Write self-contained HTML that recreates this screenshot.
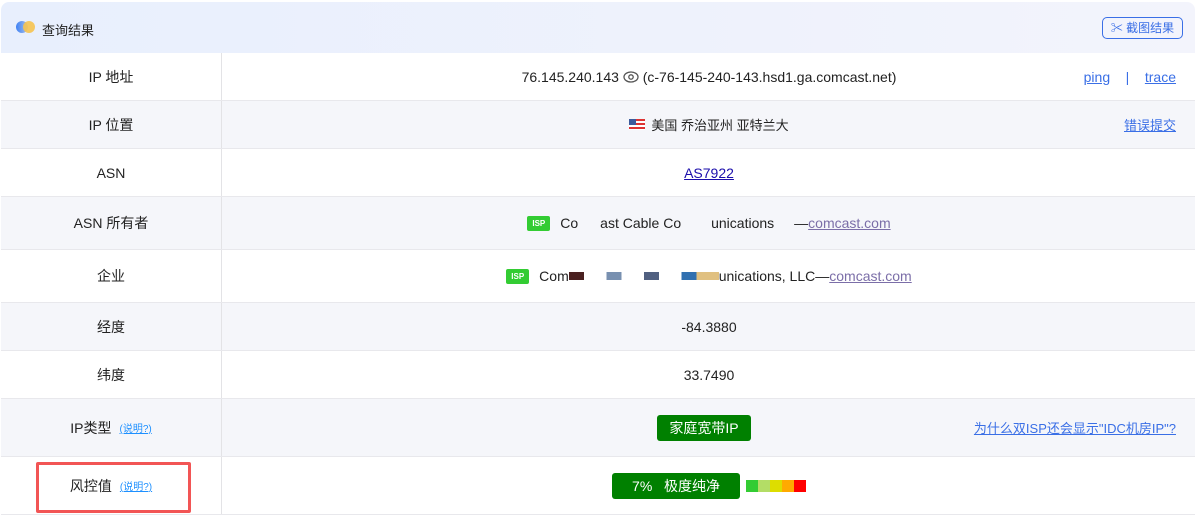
<!DOCTYPE html>
<html><head><meta charset="utf-8"><style>
*{margin:0;padding:0;box-sizing:border-box}
body{width:1195px;height:517px;background:#fff;font-family:"Liberation Sans","Noto Sans CJK SC",sans-serif;font-size:14px;color:#222;position:relative;overflow:hidden}
.hd{position:absolute;left:1px;top:2px;width:1194px;height:51px;background:linear-gradient(90deg,#e8effd,#f3f4fc);border-radius:8px 8px 0 0}
.row{position:absolute;left:1px;width:1194px;border-bottom:1px solid #e8e8ec}
.g{background:#f5f6fa}
.lab{position:absolute;left:0;top:0;width:221px;height:100%;border-right:1px solid #e3e3e6;display:flex;align-items:center;justify-content:center}
.val{position:absolute;left:222px;right:0;top:0;height:100%;display:flex;align-items:center;justify-content:center}
a{color:#3a6fe6;text-decoration:underline}
.sm{font-size:10px;color:#1e90ff;margin-left:8px}
.isp{display:inline-block;background:#33cc33;color:#fff;font-size:8px;font-weight:bold;padding:3px 5px;border-radius:2px;margin-right:10px}
.btn{background:#008000;color:#fff;border-radius:3px;padding:0 12px;height:26px;line-height:26px;font-size:14px}
.r{position:absolute;right:19px;top:0;height:100%;display:flex;align-items:center}
</style></head><body>
<div class="hd">
<div style="position:absolute;left:15px;top:19px;width:12px;height:12px;border-radius:6px;background:linear-gradient(90deg,#3f82f5,#a8c0ea)"></div>
<div style="position:absolute;left:22px;top:19px;width:12px;height:12px;border-radius:6px;background:#f6c350;opacity:.9"></div>
<div style="position:absolute;left:41px;top:18px;font-size:13px">查询结果</div>
<div style="position:absolute;right:12px;top:15px;width:81px;height:22px;border:1px solid #3a6fe6;border-radius:5px;color:#3a6fe6;font-size:12px;line-height:20px;text-align:center">✂ 截图结果</div>
</div>
<div class="row" style="top:53px;height:48px"><div class="lab">IP 地址</div><div class="val">76.145.240.143&nbsp;<svg width="16" height="12" viewBox="0 0 16 12"><ellipse cx="8" cy="6" rx="7" ry="5" fill="none" stroke="#555" stroke-width="1.3"/><circle cx="8" cy="6" r="2.2" fill="none" stroke="#555" stroke-width="1.3"/></svg>&nbsp;(c-76-145-240-143.hsd1.ga.comcast.net)</div><div class="r"><a>ping</a>&nbsp;&nbsp;&nbsp;&nbsp;<span style="color:#3a6fe6">|</span>&nbsp;&nbsp;&nbsp;&nbsp;<a>trace</a></div></div>
<div class="row g" style="top:101px;height:48px"><div class="lab">IP 位置</div><div class="val" style="font-size:13px"><span style="display:inline-block;width:16px;height:11px;background:repeating-linear-gradient(#d33 0 2px,#fff 2px 4px);position:relative;margin-right:6px"><span style="position:absolute;left:0;top:0;width:7px;height:6px;background:#3b5b9c"></span></span>美国 乔治亚州 亚特兰大</div><div class="r" style="font-size:13px"><a>错误提交</a></div></div>
<div class="row" style="top:149px;height:48px"><div class="lab">ASN</div><div class="val"><a style="color:#1a0dab">AS7922</a></div></div>
<div class="row g" style="top:197px;height:53px"><div class="lab">ASN 所有者</div><div class="val"><span class="isp">ISP</span>Co<span style="display:inline-block;width:22px"></span>ast Cable Co<span style="display:inline-block;width:30px"></span>unications<span style="display:inline-block;width:20px"></span>— <a style="color:#7b6ea8">comcast.com</a></div></div>
<div class="row" style="top:250px;height:53px"><div class="lab">企业</div><div class="val"><span class="isp">ISP</span>Com<span style="display:inline-block;width:150px;height:8px;background:linear-gradient(90deg,#4a2020 0 10%,#fff 10% 25%,#7890b0 25% 35%,#fff 35% 50%,#506080 50% 60%,#fff 60% 75%,#3070b0 75% 85%,#e0c080 85%)"></span>unications, LLC— <a style="color:#7b6ea8">comcast.com</a></div></div>
<div class="row g" style="top:303px;height:48px"><div class="lab">经度</div><div class="val">-84.3880</div></div>
<div class="row" style="top:351px;height:48px"><div class="lab">纬度</div><div class="val">33.7490</div></div>
<div class="row g" style="top:399px;height:58px"><div class="lab">IP类型<span class="sm"><u>(说明?)</u></span></div><div class="val"><span class="btn" style="margin-left:-10px">家庭宽带IP</span></div><div class="r" style="font-size:13px"><a>为什么双ISP还会显示"IDC机房IP"?</a></div></div>
<div class="row" style="top:457px;height:58px"><div class="lab">风控值<span class="sm"><u>(说明?)</u></span></div><div class="val"><span class="btn" style="padding:0 20px;margin-left:0">7%&nbsp;&nbsp;&nbsp;极度纯净</span><span style="display:inline-block;width:60px;height:12px;margin-left:6px;background:linear-gradient(90deg,#33cc33 0 20%,#b3dd66 20% 40%,#dddd00 40% 60%,#ffaa00 60% 80%,#ff0000 80%)"></span></div></div>
<div style="position:absolute;left:36px;top:462px;width:155px;height:51px;border:3px solid #f25555;border-radius:2px"></div>
</body></html>
